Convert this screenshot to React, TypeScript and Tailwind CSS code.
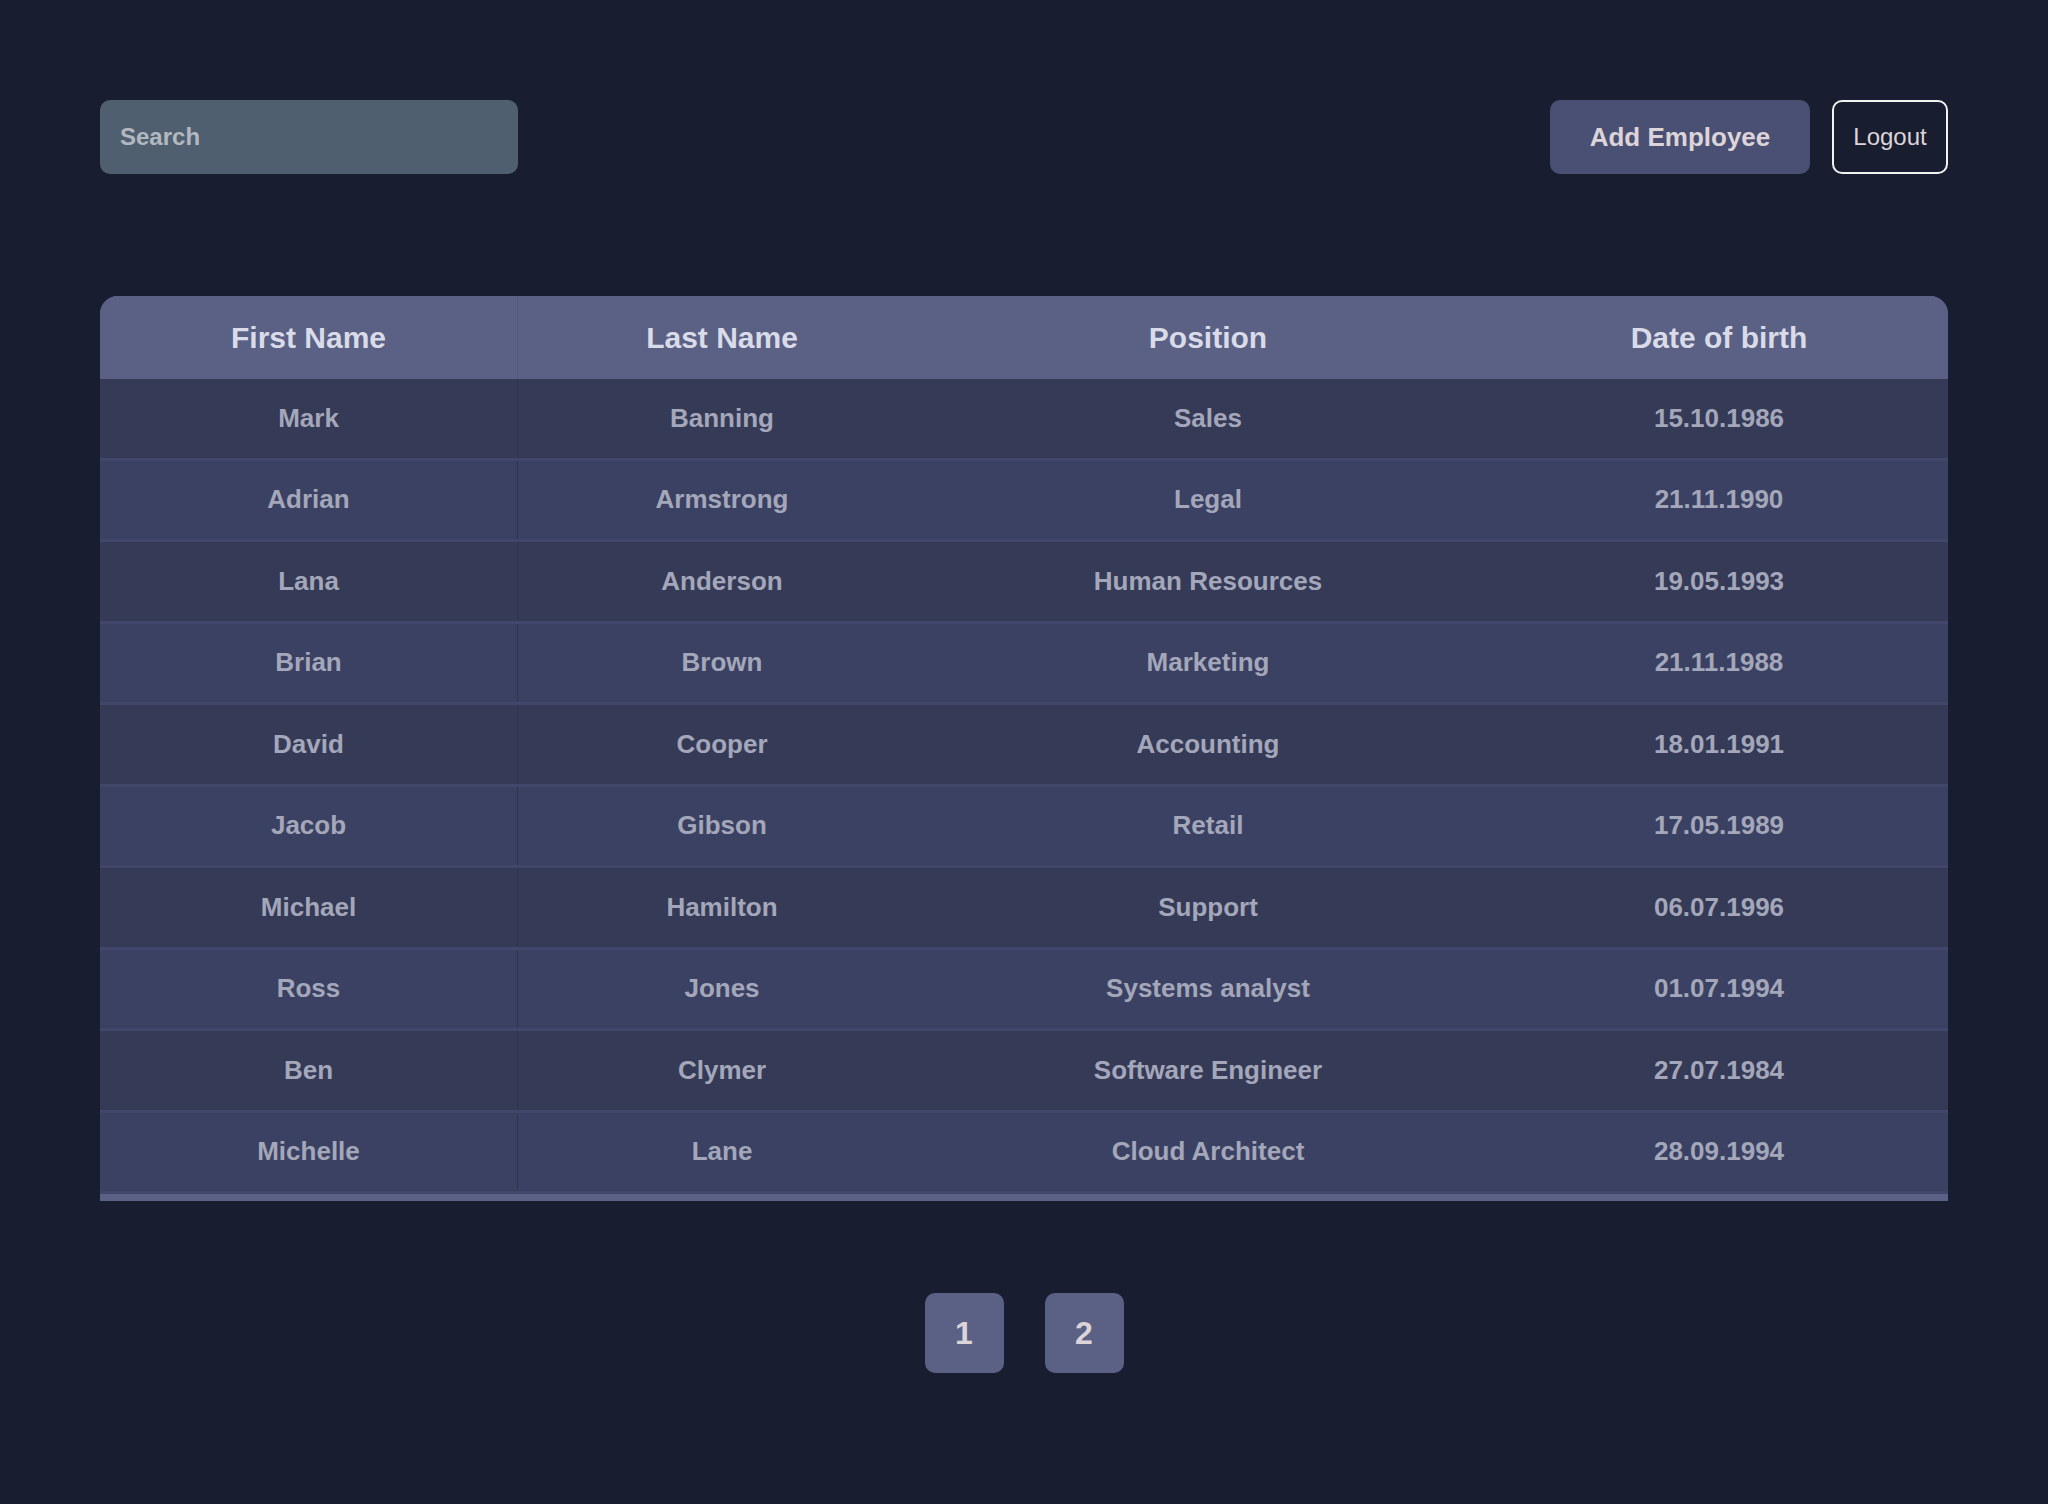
import React from "react";

const rows = [
  ["Mark", "Banning", "Sales", "15.10.1986"],
  ["Adrian", "Armstrong", "Legal", "21.11.1990"],
  ["Lana", "Anderson", "Human Resources", "19.05.1993"],
  ["Brian", "Brown", "Marketing", "21.11.1988"],
  ["David", "Cooper", "Accounting", "18.01.1991"],
  ["Jacob", "Gibson", "Retail", "17.05.1989"],
  ["Michael", "Hamilton", "Support", "06.07.1996"],
  ["Ross", "Jones", "Systems analyst", "01.07.1994"],
  ["Ben", "Clymer", "Software Engineer", "27.07.1984"],
  ["Michelle", "Lane", "Cloud Architect", "28.09.1994"],
];

const headers = ["First Name", "Last Name", "Position", "Date of birth"];

export default function App() {
  return (
    <div
      className="min-h-[1504px] w-full bg-[#191d30] px-[100px] pt-[100px]"
      style={{ fontFamily: '"Liberation Sans", Arial, sans-serif' }}
    >
      <div className="flex items-center justify-between">
        <div className="flex h-[74px] w-[418px] items-center rounded-[10px] bg-[#4f5f70] pl-[20px] text-[24px] font-bold text-[#b3b8c0]">
          Search
        </div>
        <div className="flex items-center gap-[22px]">
          <button className="flex h-[74px] w-[260px] items-center justify-center rounded-[10px] bg-[#4a5073] text-[26px] font-bold text-[#dcd4d8]">
            Add Employee
          </button>
          <button className="flex h-[74px] w-[116px] items-center justify-center rounded-[10px] border-2 border-[#f2f2f2] text-[24px] text-[#dcd4d8]">
            Logout
          </button>
        </div>
      </div>

      <div className="mt-[122px] overflow-hidden rounded-t-[18px] bg-[#5a6185] pb-[7px]">
        <div className="grid h-[83px] grid-cols-[418px_408px_564px_458px] bg-[#5a6185]">
          {headers.map((h, i) => (
            <div
              key={h}
              className={`flex items-center justify-center text-[30px] font-bold text-[#d9dbe8] ${
                i === 0 ? "border-r border-[#535a7c]" : ""
              }`}
            >
              {h}
            </div>
          ))}
        </div>
        {rows.map((r, ri) => (
          <div
            key={ri}
            className={`grid h-[81.5px] grid-cols-[418px_408px_564px_458px] border-b-[3px] border-[#41476a] ${
              ri % 2 === 0 ? "bg-[#353a57]" : "bg-[#3b4162]"
            }`}
          >
            {r.map((c, ci) => (
              <div
                key={ci}
                className={`flex items-center justify-center text-[26px] font-bold text-[#a4a7ba] ${
                  ci === 0 ? "border-r border-[#30354e]" : ""
                }`}
              >
                {c}
              </div>
            ))}
          </div>
        ))}
      </div>

      <div className="mt-[92px] flex justify-center gap-[41px]">
        {["1", "2"].map((p) => (
          <button
            key={p}
            className="flex h-[80px] w-[79px] items-center justify-center rounded-[10px] bg-[#5a6185] text-[32px] font-bold text-[#dcd4d8]"
          >
            {p}
          </button>
        ))}
      </div>
    </div>
  );
}
